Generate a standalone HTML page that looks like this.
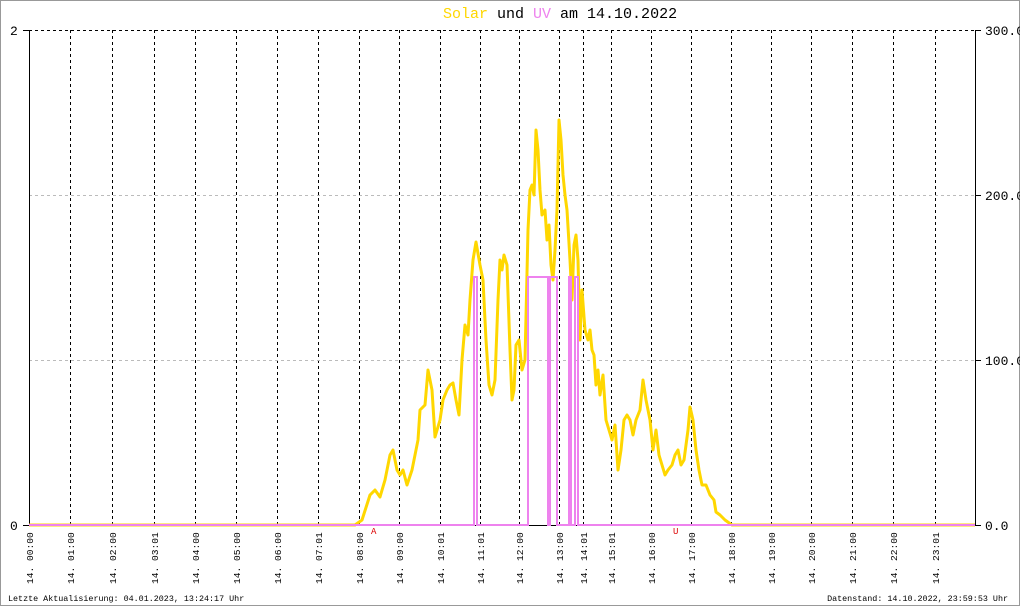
<!DOCTYPE html>
<html><head><meta charset="utf-8"><style>
html,body{margin:0;padding:0;background:#fff}
svg{display:block}
</style></head><body>
<svg width="1020" height="606" xmlns="http://www.w3.org/2000/svg" font-family="Liberation Mono, monospace">
<rect x="0.5" y="0.5" width="1019" height="605" fill="#fff" stroke="#999"/>
<text x="443" y="18" font-size="15"><tspan fill="#ffd700">Solar</tspan><tspan fill="#000"> und </tspan><tspan fill="#ee82ee">UV</tspan><tspan fill="#000"> am 14.10.2022</tspan></text>
<g stroke="#000" stroke-dasharray="3,3" stroke-width="1">
<line x1="29" y1="30.5" x2="975" y2="30.5"/>
<line x1="70.5" y1="30" x2="70.5" y2="525"/><line x1="112.5" y1="30" x2="112.5" y2="525"/><line x1="154.5" y1="30" x2="154.5" y2="525"/><line x1="195.5" y1="30" x2="195.5" y2="525"/><line x1="236.5" y1="30" x2="236.5" y2="525"/><line x1="277.5" y1="30" x2="277.5" y2="525"/><line x1="318.5" y1="30" x2="318.5" y2="525"/><line x1="359.5" y1="30" x2="359.5" y2="525"/><line x1="399.5" y1="30" x2="399.5" y2="525"/><line x1="440.5" y1="30" x2="440.5" y2="525"/><line x1="480.5" y1="30" x2="480.5" y2="525"/><line x1="519.5" y1="30" x2="519.5" y2="525"/><line x1="559.5" y1="30" x2="559.5" y2="525"/><line x1="583.5" y1="30" x2="583.5" y2="525"/><line x1="611.5" y1="30" x2="611.5" y2="525"/><line x1="651.5" y1="30" x2="651.5" y2="525"/><line x1="691.5" y1="30" x2="691.5" y2="525"/><line x1="731.5" y1="30" x2="731.5" y2="525"/><line x1="771.5" y1="30" x2="771.5" y2="525"/><line x1="811.5" y1="30" x2="811.5" y2="525"/><line x1="852.5" y1="30" x2="852.5" y2="525"/><line x1="893.5" y1="30" x2="893.5" y2="525"/><line x1="935.5" y1="30" x2="935.5" y2="525"/>
</g>
<g stroke="#bbb" stroke-dasharray="3,3"><line x1="29" y1="195.5" x2="975" y2="195.5"/><line x1="29" y1="360.5" x2="975" y2="360.5"/></g>
<g stroke="#000"><line x1="29.5" y1="30" x2="29.5" y2="526"/><line x1="975.5" y1="30" x2="975.5" y2="526"/><line x1="23" y1="30.5" x2="29" y2="30.5"/><line x1="23" y1="525.5" x2="975" y2="525.5"/>
<line x1="975" y1="30.5" x2="981" y2="30.5"/><line x1="975" y1="195.5" x2="981" y2="195.5"/><line x1="975" y1="360.5" x2="981" y2="360.5"/><line x1="975" y1="525.5" x2="981" y2="525.5"/></g>
<g font-size="13" fill="#000"><text x="10" y="35">2</text><text x="10" y="530">0</text>
<text x="985" y="35">300.0</text><text x="985" y="200">200.0</text><text x="985" y="365">100.0</text><text x="985" y="530">0.0</text></g>
<polyline fill="none" stroke="#ffd700" stroke-width="3" stroke-linejoin="round" points="29,525 355,525 362,520 370,495 375,490 380,497 385,480 390,455 393,450 397,470 400,475 403,470 407,485 412,470 418,440 420,410 425,405 428,370 432,390 435,437 440,420 443,400 447,390 450,385 453,383 456,400 459,415 462,360 465,325 468,335 470,300 473,260 476,242 480,265 483,280 486,340 489,385 492,395 495,380 498,300 500,260 502,270 504,255 507,265 510,350 512,400 514,390 516,345 519,340 522,370 525,360 528,230 530,190 532,185 534,195 536,130 538,150 540,190 542,215 545,210 547,240 549,225 551,265 553,280 555,250 557,210 559,120 561,140 563,175 565,195 567,210 570,260 572,300 574,245 576,235 578,260 580,340 582,290 585,330 588,340 590,330 592,350 594,355 596,385 598,370 600,395 603,375 606,420 609,430 612,440 615,425 618,470 621,450 624,420 627,415 630,420 633,435 636,420 640,410 643,380 646,400 650,420 653,450 656,430 659,455 662,465 665,475 668,470 672,465 675,455 678,450 681,465 684,460 688,430 690,407 693,420 696,450 699,470 702,485 706,485 710,495 714,500 716,512 720,515 725,520 732,525 975,525"/>
<polyline fill="none" stroke="#ee82ee" stroke-width="2" points="29,525 474,525 474,277 477,277 477,525 528,525 528,277 548,277 548,525 550,525 550,277 557,277 557,525 569,525 569,277 571,277 571,525 575,525 575,277 578,277 578,525 975,525"/>
<g font-size="9" fill="#d00"><text x="371" y="534">A</text><text x="673" y="534">U</text></g>
<g font-size="9.6" fill="#000">
<text transform="translate(33,584) rotate(-90)">14. 00:00</text><text transform="translate(74,584) rotate(-90)">14. 01:00</text><text transform="translate(116,584) rotate(-90)">14. 02:00</text><text transform="translate(158,584) rotate(-90)">14. 03:01</text><text transform="translate(199,584) rotate(-90)">14. 04:00</text><text transform="translate(240,584) rotate(-90)">14. 05:00</text><text transform="translate(281,584) rotate(-90)">14. 06:00</text><text transform="translate(322,584) rotate(-90)">14. 07:01</text><text transform="translate(363,584) rotate(-90)">14. 08:00</text><text transform="translate(403,584) rotate(-90)">14. 09:00</text><text transform="translate(444,584) rotate(-90)">14. 10:01</text><text transform="translate(484,584) rotate(-90)">14. 11:01</text><text transform="translate(523,584) rotate(-90)">14. 12:00</text><text transform="translate(563,584) rotate(-90)">14. 13:00</text><text transform="translate(587,584) rotate(-90)">14. 14:01</text><text transform="translate(615,584) rotate(-90)">14. 15:01</text><text transform="translate(655,584) rotate(-90)">14. 16:00</text><text transform="translate(695,584) rotate(-90)">14. 17:00</text><text transform="translate(735,584) rotate(-90)">14. 18:00</text><text transform="translate(775,584) rotate(-90)">14. 19:00</text><text transform="translate(815,584) rotate(-90)">14. 20:00</text><text transform="translate(856,584) rotate(-90)">14. 21:00</text><text transform="translate(897,584) rotate(-90)">14. 22:00</text><text transform="translate(939,584) rotate(-90)">14. 23:01</text>
</g>
<g font-size="8.4" fill="#000"><text x="8" y="601">Letzte Aktualisierung: 04.01.2023, 13:24:17 Uhr</text><text x="1008" y="601" text-anchor="end">Datenstand: 14.10.2022, 23:59:53 Uhr</text></g>
</svg>
</body></html>
